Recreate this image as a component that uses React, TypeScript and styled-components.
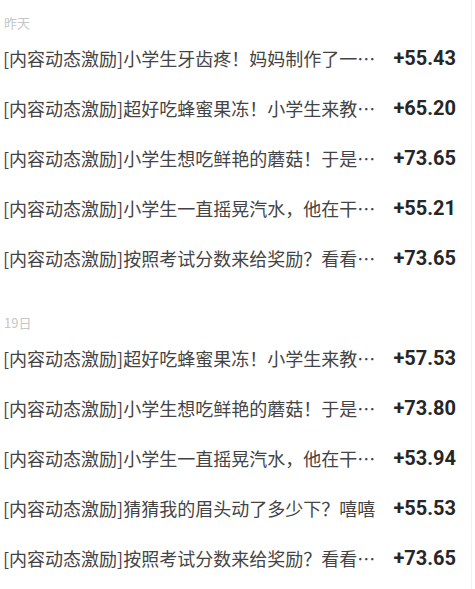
import React from "react";
import styled, { createGlobalStyle } from "styled-components";

const GlobalStyle = createGlobalStyle`
  html, body {
    margin: 0;
    padding: 0;
    background: #ffffff;
  }
  body {
    font-family: "Noto Sans CJK SC", "Noto Sans", Roboto, sans-serif;
  }
`;

const Page = styled.div`
  width: 471px;
  min-height: 589px;
  border-right: 1px solid #f1f1f1;
  background: #ffffff;
`;

const Section = styled.section`
  display: flex;
  flex-direction: column;
  & + & {
    margin-top: 17px;
  }
`;

const DateHeader = styled.div`
  padding: 13px 0 0 4px;
  height: 20px;
  line-height: 20px;
  font-size: 13px;
  color: #c6c6c6;
`;

const Row = styled.div`
  display: flex;
  align-items: center;
  height: 50px;
  padding: 0 15px 0 3px;
`;

const Title = styled.div`
  flex: 1;
  min-width: 0;
  font-size: 18px;
  color: #444444;
  white-space: nowrap;
  overflow: hidden;
  text-overflow: ellipsis;
`;

const Amount = styled.div`
  flex-shrink: 0;
  margin-left: 13px;
  font-family: Roboto, "Liberation Sans", sans-serif;
  font-weight: 700;
  font-size: 20px;
  color: #262626;
`;

const data = [
  {
    date: "昨天",
    items: [
      ["[内容动态激励]小学生牙齿疼！妈妈制作了一份美味", "+55.43"],
      ["[内容动态激励]超好吃蜂蜜果冻！小学生来教你做", "+65.20"],
      ["[内容动态激励]小学生想吃鲜艳的蘑菇！于是妈妈", "+73.65"],
      ["[内容动态激励]小学生一直摇晃汽水，他在干什么", "+55.21"],
      ["[内容动态激励]按照考试分数来给奖励？看看结果", "+73.65"],
    ],
  },
  {
    date: "19日",
    items: [
      ["[内容动态激励]超好吃蜂蜜果冻！小学生来教你做", "+57.53"],
      ["[内容动态激励]小学生想吃鲜艳的蘑菇！于是妈妈", "+73.80"],
      ["[内容动态激励]小学生一直摇晃汽水，他在干什么", "+53.94"],
      ["[内容动态激励]猜猜我的眉头动了多少下？嘻嘻", "+55.53"],
      ["[内容动态激励]按照考试分数来给奖励？看看结果", "+73.65"],
    ],
  },
];

export default function App() {
  return (
    <>
      <GlobalStyle />
      <Page>
        {data.map((section) => (
          <Section key={section.date}>
            <DateHeader>{section.date}</DateHeader>
            {section.items.map(([title, amount], i) => (
              <Row key={i}>
                <Title>{title}</Title>
                <Amount>{amount}</Amount>
              </Row>
            ))}
          </Section>
        ))}
      </Page>
    </>
  );
}
